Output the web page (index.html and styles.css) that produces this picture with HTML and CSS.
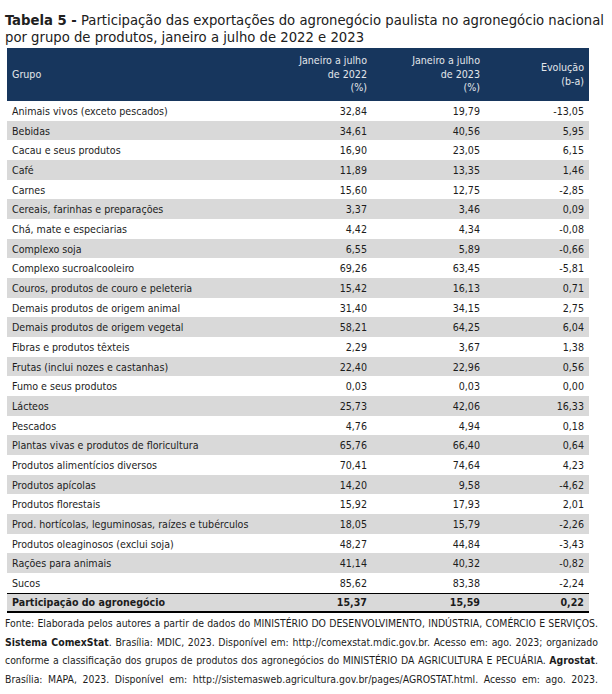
FILE: index.html
```html
<!DOCTYPE html>
<html lang="pt-BR">
<head>
<meta charset="utf-8">
<title>Tabela 5</title>
<link rel="stylesheet" href="styles.css">
</head>
<body>
<div class="page">
  <h1 class="title"><b>Tabela 5 -</b> Participação das exportações do agronegócio paulista no agronegócio nacional<br>por grupo de produtos, janeiro a julho de 2022 e 2023</h1>
  <table class="data">
    <colgroup>
      <col class="c1"><col class="c2"><col class="c3"><col class="c4">
    </colgroup>
    <thead>
      <tr>
        <th class="left">Grupo</th>
        <th>Janeiro a julho<br>de 2022<br>(%)</th>
        <th>Janeiro a julho<br>de 2023<br>(%)</th>
        <th>Evolução<br>(b-a)</th>
      </tr>
    </thead>
    <tbody>
      <tr><td>Animais vivos (exceto pescados)</td><td>32,84</td><td>19,79</td><td>-13,05</td></tr>
      <tr><td>Bebidas</td><td>34,61</td><td>40,56</td><td>5,95</td></tr>
      <tr><td>Cacau e seus produtos</td><td>16,90</td><td>23,05</td><td>6,15</td></tr>
      <tr><td>Café</td><td>11,89</td><td>13,35</td><td>1,46</td></tr>
      <tr><td>Carnes</td><td>15,60</td><td>12,75</td><td>-2,85</td></tr>
      <tr><td>Cereais, farinhas e preparações</td><td>3,37</td><td>3,46</td><td>0,09</td></tr>
      <tr><td>Chá, mate e especiarias</td><td>4,42</td><td>4,34</td><td>-0,08</td></tr>
      <tr><td>Complexo soja</td><td>6,55</td><td>5,89</td><td>-0,66</td></tr>
      <tr><td>Complexo sucroalcooleiro</td><td>69,26</td><td>63,45</td><td>-5,81</td></tr>
      <tr><td>Couros, produtos de couro e peleteria</td><td>15,42</td><td>16,13</td><td>0,71</td></tr>
      <tr><td>Demais produtos de origem animal</td><td>31,40</td><td>34,15</td><td>2,75</td></tr>
      <tr><td>Demais produtos de origem vegetal</td><td>58,21</td><td>64,25</td><td>6,04</td></tr>
      <tr><td>Fibras e produtos têxteis</td><td>2,29</td><td>3,67</td><td>1,38</td></tr>
      <tr><td>Frutas (inclui nozes e castanhas)</td><td>22,40</td><td>22,96</td><td>0,56</td></tr>
      <tr><td>Fumo e seus produtos</td><td>0,03</td><td>0,03</td><td>0,00</td></tr>
      <tr><td>Lácteos</td><td>25,73</td><td>42,06</td><td>16,33</td></tr>
      <tr><td>Pescados</td><td>4,76</td><td>4,94</td><td>0,18</td></tr>
      <tr><td>Plantas vivas e produtos de floricultura</td><td>65,76</td><td>66,40</td><td>0,64</td></tr>
      <tr><td>Produtos alimentícios diversos</td><td>70,41</td><td>74,64</td><td>4,23</td></tr>
      <tr><td>Produtos apícolas</td><td>14,20</td><td>9,58</td><td>-4,62</td></tr>
      <tr><td>Produtos florestais</td><td>15,92</td><td>17,93</td><td>2,01</td></tr>
      <tr><td>Prod. hortícolas, leguminosas, raízes e tubérculos</td><td>18,05</td><td>15,79</td><td>-2,26</td></tr>
      <tr><td>Produtos oleaginosos (exclui soja)</td><td>48,27</td><td>44,84</td><td>-3,43</td></tr>
      <tr><td>Rações para animais</td><td>41,14</td><td>40,32</td><td>-0,82</td></tr>
      <tr><td>Sucos</td><td>85,62</td><td>83,38</td><td>-2,24</td></tr>
    </tbody>
    <tfoot>
      <tr><td>Participação do agronegócio</td><td>15,37</td><td>15,59</td><td>0,22</td></tr>
    </tfoot>
  </table>
  <div class="source">
    <span class="line">Fonte: Elaborada pelos autores a partir de dados do MINISTÉRIO DO DESENVOLVIMENTO, INDÚSTRIA, COMÉRCIO E SERVIÇOS.</span>
    <span class="line"><b>Sistema ComexStat</b>. Brasília: MDIC, 2023. Disponível em: http://comexstat.mdic.gov.br. Acesso em: ago. 2023; organizado</span>
    <span class="line">conforme a classificação dos grupos de produtos dos agronegócios do MINISTÉRIO DA AGRICULTURA E PECUÁRIA. <b>Agrostat</b>.</span>
    <span class="line">Brasília: MAPA, 2023. Disponível em: http://sistemasweb.agricultura.gov.br/pages/AGROSTAT.html. Acesso em: ago. 2023.</span>
  </div>
</div>
</body>
</html>
```

FILE: styles.css
```css
html, body {
  margin: 0;
  padding: 0;
  background: #ffffff;
}

.page {
  padding: 11px 5px 0 5px;
  font-family: "DejaVu Sans Condensed", "DejaVu Sans", sans-serif;
  color: #1c1c1c;
}

.title {
  margin: 0 0 3px 0;
  font-size: 14.7px;
  line-height: 17px;
  font-weight: normal;
  color: #202020;
}

.title b {
  font-weight: bold;
}

.data {
  margin-left: 2px;
  width: 582px;
  border-collapse: collapse;
  table-layout: fixed;
  font-size: 10.6px;
}

.c1 { width: 252px; }
.c2 { width: 113px; }
.c3 { width: 113px; }
.c4 { width: 104px; }

.data th {
  background: #17365d;
  color: #e3e6ea;
  font-weight: normal;
  height: 53px;
  padding: 0 5px;
  text-align: right;
  vertical-align: middle;
  line-height: 13.5px;
}

.data th.left {
  text-align: left;
}

.data td {
  height: 19.68px;
  padding: 0 5px;
  text-align: right;
  line-height: 12px;
  vertical-align: middle;
  white-space: nowrap;
}

.data td:first-child {
  text-align: left;
}

.data tbody tr:nth-child(even) td {
  background: #d9d9d9;
}

.data tfoot td {
  background: #d9d9d9;
  font-weight: bold;
  border-top: 1px solid #000;
  border-bottom: 2px solid #000;
  height: 17px;
}

.source {
  margin-top: 1px;
  width: 593px;
  font-size: 10.4px;
  line-height: 18.7px;
  color: #1c1c1c;
}

.source .line {
  display: block;
  text-align: justify;
  text-align-last: justify;
  white-space: nowrap;
}
```
